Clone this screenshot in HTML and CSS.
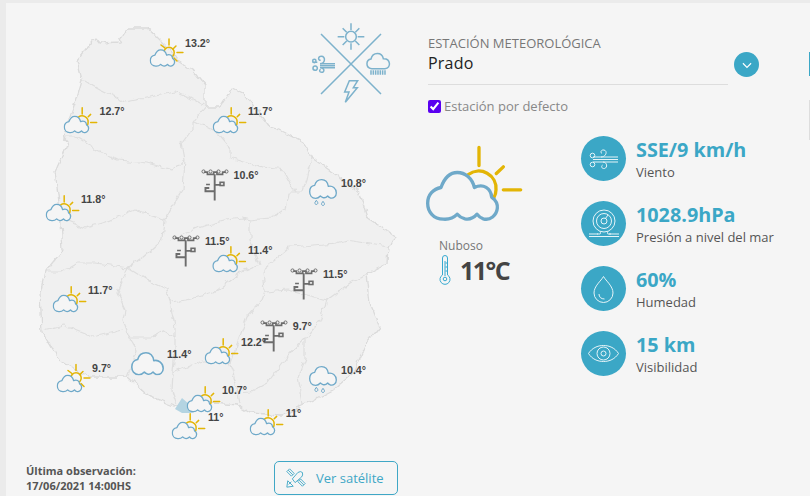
FILE: index.html
```html
<!DOCTYPE html>
<html lang="es">
<head>
    <meta charset="UTF-8">
    <meta name="viewport" content="width=device-width, initial-scale=1.0">
    <title>Estación meteorológica</title>
    <link rel="stylesheet" href="styles.css">
</head>
<body>

    <!-- Icon definitions -->
    <svg class="defs" width="0" height="0">
        <filter id="rough" x="-5%" y="-5%" width="110%" height="110%">
            <feTurbulence type="fractalNoise" baseFrequency="0.12" numOctaves="2" seed="4"/>
            <feDisplacementMap in="SourceGraphic" scale="7" xChannelSelector="R" yChannelSelector="G"/>
            <feGaussianBlur stdDeviation="0.35"/>
        </filter>

        <symbol id="sun-cloud" viewBox="30 30 300 260">
            <g class="sun">
                <path d="M192 58V112M244 136L265 116M265 185H317"/>
                <path d="M160 139A52 52 0 0 1 243 185Q243 198 236 210"/>
            </g>
            <path class="cloud" d="M85 273C55 273 38 250 38 225C38 200 55 182 78 178C88 150 105 133 127 133C150 133 172 150 178 178C205 165 228 180 230 207C245 215 248 232 247 240C245 262 225 278 205 272Q193 268 186 258Q170 276 150 272Q135 268 127 258Q110 275 85 273Z"/>
        </symbol>

        <symbol id="sun-cloud-full" viewBox="30 30 300 260">
            <g class="sun">
                <path d="M199 40V91M130 91L164 117M259 100L233 126M268 156H319M242 203L268 229"/>
                <circle cx="199" cy="156" r="45"/>
            </g>
            <path class="cloud" d="M85 273C55 273 38 250 38 225C38 200 55 182 78 178C88 150 105 133 127 133C150 133 172 150 178 178C205 165 228 180 230 207C245 215 248 232 247 240C245 262 225 278 205 272Q193 268 186 258Q170 276 150 272Q135 268 127 258Q110 275 85 273Z"/>
        </symbol>

        <symbol id="cloud" viewBox="0 0 84 60">
            <path class="cloud thin" d="M20 58C8 58 2 48 2 38C2 27 9 20 17 19C20 8 29 2 38 2C48 2 56 9 58 22C70 19 82 28 82 42C82 52 74 59 64 57Q59 55 56 51Q50 58 42 56Q36 54 34 51Q28 58 20 58Z"/>
        </symbol>

        <symbol id="rain-cloud" viewBox="0 0 84 82">
            <path class="cloud thin" d="M20 58C8 58 2 48 2 38C2 27 9 20 17 19C20 8 29 2 38 2C48 2 56 9 58 22C70 19 82 28 82 42C82 52 74 59 64 57Q59 55 56 51Q50 58 42 56Q36 54 34 51Q28 58 20 58Z"/>
            <path class="drop" d="M22 64L26 70A4.500 4.500 0 1 1 18 70ZM42 67L46 73A4.500 4.500 0 1 1 38 73Z"/>
        </symbol>

        <symbol id="station" viewBox="600 500 88 105">
            <g class="mast">
                <path d="M610 513H620V520H640V513H650V520H668V513H678"/>
                <path class="pole" d="M643 520V602M643 553H660M643 573H614V563H626"/>
                <rect x="660" y="545" width="12" height="10"/>
                <path d="M616 552H628"/>
            </g>
            <g class="mast-dots">
                <circle cx="608" cy="511" r="5"/>
                <circle cx="630" cy="511" r="5"/>
                <circle cx="655" cy="511" r="5"/>
                <circle cx="680" cy="511" r="5"/>
            </g>
        </symbol>
    </svg>

    <div class="panel">
        <div class="col-map">
            <svg class="map" viewBox="6 3 400 455" width="400" height="455">
                <!-- Country and departments -->
                <g class="land-group">
                    <path class="land" d="M128 28L147 28L157 37L170 50L177 60L193 70L205 85L205 107L220 107L232 88L243 93L257 110L270 127L280 130L303 142L312 157L340 177L360 193L367 217L397 238L388 247L387 263L367 273L370 303L380 327L367 343L353 373L333 390L300 407L283 415L250 413L237 405L213 403L177 407L147 395L128 377L87 377L57 357L42 332L40 293L45 272L63 250L60 210L55 172L68 143L63 137L77 97L82 80L77 60L95 37L100 43L120 42Z"/>
                    <path class="border" d="M82 80L100 90L125 102L150 97L175 92L190 98L205 107L193 122L193 128L182 143L185 160L173 170L147 163L120 160L97 150L77 137L63 137"/>
                    <path class="border" d="M185 160L183 190L170 210L165 220L163 240L143 257L128 268L117 293L125 310L123 320L130 338L137 350L128 377"/>
                    <path class="border" d="M165 220L135 210L105 222L85 228L65 220"/>
                    <path class="border" d="M128 268L97 263L78 263L63 272L45 272"/>
                    <path class="border" d="M128 268L147 280L167 290L170 302L187 300L213 293L240 273L260 264L250 240L250 220L270 218L285 210L288 192L303 192L307 180L312 157"/>
                    <path class="border" d="M170 302L175 327L175 350L173 373L172 390L177 405"/>
                    <path class="border" d="M130 338L150 338L163 330L175 338"/>
                    <path class="border" d="M42 330L63 325L93 337L123 330"/>
                    <path class="border" d="M173 373L200 362L227 357L233 373L240 403"/>
                    <path class="border" d="M230 363L247 317L262 300L265 292L263 270L290 247L337 243L347 240L388 247"/>
                    <path class="border" d="M265 292L287 290L327 300L350 283L367 273"/>
                    <path class="border" d="M233 393L250 392L267 383L287 357L305 338L320 320L327 300M305 338L305 358L298 377L302 397L303 405"/>
                    <path class="border" d="M193 120L218 133L230 147L230 157L263 167L283 170L295 192"/>
                    <path class="border" d="M250 220L242 218L227 220L200 227L170 240"/>
                </g>
                <path class="bay" d="M175 409L182 398L190 405L203 408L192 413L182 413Z"/>

                <!-- Stations -->
                <use class="small" href="#sun-cloud-full" x="149.4" y="37.9" width="34.8" height="30.2"/>
                <use class="small" href="#sun-cloud" x="63.4" y="104.4" width="34.8" height="30.2"/>
                <use class="small" href="#sun-cloud" x="212.4" y="104.4" width="34.8" height="30.2"/>
                <use class="small" href="#sun-cloud" x="45.4" y="192.4" width="34.8" height="30.2"/>
                <use class="small" href="#sun-cloud" x="212.1" y="243.4" width="34.8" height="30.2"/>
                <use class="small" href="#sun-cloud" x="52.4" y="283.4" width="34.8" height="30.2"/>
                <use class="small" href="#sun-cloud-full" x="56.4" y="363.4" width="34.8" height="30.2"/>
                <use class="small" href="#sun-cloud" x="204.4" y="335.4" width="34.8" height="30.2"/>
                <use class="small" href="#sun-cloud" x="186.4" y="383.4" width="34.8" height="30.2"/>
                <use class="small" href="#sun-cloud" x="171.4" y="410.4" width="34.8" height="30.2"/>
                <use class="small" href="#sun-cloud" x="249.4" y="406.4" width="34.8" height="30.2"/>
                <use href="#cloud" x="131" y="352" width="33" height="23.6"/>
                <use href="#rain-cloud" x="309" y="179" width="28" height="27.3"/>
                <use href="#rain-cloud" x="309" y="366" width="28" height="27.3"/>
                <use href="#station" x="201" y="168" width="28" height="33.4"/>
                <use href="#station" x="172" y="234" width="28" height="33.4"/>
                <use href="#station" x="290" y="267" width="28" height="33.4"/>
                <use href="#station" x="260" y="319" width="28" height="33.4"/>

                <text x="185" y="47">13.2°</text>
                <text x="99.5" y="115">12.7°</text>
                <text x="248" y="115">11.7°</text>
                <text x="81" y="203">11.8°</text>
                <text x="233.5" y="179">10.6°</text>
                <text x="341" y="187">10.8°</text>
                <text x="205" y="245">11.5°</text>
                <text x="248" y="254">11.4°</text>
                <text x="323" y="278">11.5°</text>
                <text x="292.7" y="330">9.7°</text>
                <text x="88" y="294">11.7°</text>
                <text x="92" y="372">9.7°</text>
                <text x="167" y="358">11.4°</text>
                <text x="241" y="346">12.2°</text>
                <text x="222" y="394">10.7°</text>
                <text x="208" y="421">11°</text>
                <text x="285.7" y="417">11°</text>
                <text x="341" y="374">10.4°</text>

                <!-- Emblem -->
                <g class="emblem" transform="translate(300 15) scale(.3333)">
                    <path d="M63 57L243 237M243 57L63 237"/>
                    <circle cx="153" cy="65" r="16"/>
                    <path d="M153 25V45M153 85V104M113 65H133M173 65H193M128 40L140 52M178 40L166 52M128 90L140 78M178 90L166 78"/>
                    <path d="M60 146H105M60 152H105M60 158H105"/>
                    <path d="M60 146C76 146 78 124 64 124C54 124 53 136 62 136"/>
                    <path d="M38 142H52M64 158C74 160 74 172 65 172C58 172 57 165 62 163M46 153A6 6 0 1 1 45 166A6 6 0 0 1 46 153"/>
                    <circle cx="43" cy="138" r="5"/>
                    <path d="M215 161C195 158 198 134 213 132C218 110 246 110 250 131C272 130 275 160 255 161Z"/>
                    <path d="M213 166V179M220 166V179M227 166V179M234 166V179M241 166V179M248 166V179M255 166V179"/>
                    <path d="M148 197H173L160 218H172L136 262L147 231H134Z"/>
                </g>
            </svg>

            <div class="map-footer">
                <p class="last-obs">Última observación:<br>17/06/2021 14:00HS</p>
                <button class="btn-sat">
                    <svg class="sat-icon" viewBox="0 0 24 24" width="22" height="22">
                        <path d="M8 13L14 6Q17 4 19 6Q20 9 18 11L11 17Z"/>
                        <path d="M2 5L5 2L10 7L7 10ZM14 16L17 13L22 18L19 21Z"/>
                        <path d="M3.500 3.500L8.500 8.500M15.500 14.500L20.500 19.500"/>
                        <path d="M3 15L9 21L2 22ZM7 16L4 19"/>
                    </svg>
                    Ver satélite
                </button>
            </div>
        </div>

        <div class="col-info">
            <div class="station-select">
                <div class="select-text">
                    <span class="select-label">ESTACIÓN METEOROLÓGICA</span>
                    <span class="select-value">Prado</span>
                </div>
                <span class="select-btn">
                    <svg viewBox="0 0 12 12" width="14" height="14"><path d="M2.500 4.500L6 8L9.500 4.500"/></svg>
                </span>
            </div>

            <label class="default-check">
                <input type="checkbox" checked>
                Estación por defecto
            </label>

            <div class="weather">
                <div class="now">
                    <svg class="now-icon" width="100" height="87"><use href="#sun-cloud" width="100" height="87"/></svg>
                    <div class="now-text">
                        <span class="now-state">Nuboso</span>
                        <div class="now-temp">
                            <svg class="thermo" viewBox="0 0 12 30" width="12" height="30">
                                <path d="M3.500 20V3A2.500 2.500 0 0 1 8.500 3V20A5 5 0 1 1 3.500 20Z"/>
                                <circle cx="6" cy="24" r="1.800"/>
                                <path d="M6 21V6M8.500 8H6.500M8.500 12H6.500M8.500 16H6.500"/>
                            </svg>
                            <span>11°C</span>
                        </div>
                    </div>
                </div>

                <ul class="stats">
                    <li>
                        <span class="stat-icon">
                            <svg viewBox="0 0 45 45" width="45" height="45">
                                <path d="M12 21H37M12 23.500H37M12 26H37"/>
                                <path d="M20 21C25 21 27 15 23 14C20 13.500 19 16.500 21 17.500"/>
                                <circle cx="11.500" cy="19.500" r="2.300"/>
                                <path d="M22 26C26 26 27 31.500 23.500 32.500C20.500 33 20 30 21.500 29"/>
                                <circle cx="11.500" cy="28.500" r="2.300"/>
                            </svg>
                        </span>
                        <div class="stat-text"><strong>SSE/9 km/h</strong><span>Viento</span></div>
                    </li>
                    <li>
                        <span class="stat-icon">
                            <svg viewBox="0 0 45 45" width="45" height="45">
                                <circle cx="23" cy="20" r="11"/>
                                <circle cx="23" cy="20" r="7.500"/>
                                <circle cx="23" cy="20" r="3"/>
                                <path d="M24 18L27 14M16 33H19C19.500 33 20 32 19 30.500M30 33H27C26.500 33 26 32 27 30.500M8 33H17M28 33H38M8 35.500H38"/>
                            </svg>
                        </span>
                        <div class="stat-text"><strong>1028.9hPa</strong><span>Presión a nivel del mar</span></div>
                    </li>
                    <li>
                        <span class="stat-icon">
                            <svg viewBox="0 0 45 45" width="45" height="45">
                                <path d="M22.500 10.500C20 15 13 20 13 27A9.500 9.500 0 0 0 32 27C32 20 25 15 22.500 10.500Z"/>
                                <path d="M18 28C18 31 20 33 23.500 33"/>
                            </svg>
                        </span>
                        <div class="stat-text"><strong>60%</strong><span>Humedad</span></div>
                    </li>
                    <li>
                        <span class="stat-icon">
                            <svg viewBox="0 0 45 45" width="45" height="45">
                                <path d="M7.500 22.500C11 17 16.500 14.500 22.500 14.500C28.500 14.500 34 17 37.500 22.500C34 28 28.500 30.500 22.500 30.500C16.500 30.500 11 28 7.500 22.500Z"/>
                                <circle cx="22.500" cy="22.500" r="6.500"/>
                                <circle cx="22.500" cy="22.500" r="2.500"/>
                            </svg>
                        </span>
                        <div class="stat-text"><strong>15 km</strong><span>Visibilidad</span></div>
                    </li>
                </ul>
            </div>
        </div>

        <span class="edge-tab"></span>
        <span class="edge-line"></span>
    </div>

</body>
</html>
```

FILE: styles.css
```css
* {
    box-sizing: border-box;
}

html, body {
    height: 100%;
}

body {
    font-family: "Open Sans", sans-serif;
    background-color: #ebebeb;
    margin: 0;
    padding: 3px 0 0 6px;
    overflow: hidden;
}

.defs {
    position: absolute;
}

.panel {
    position: relative;
    display: flex;
    height: 493px;
    background-color: #f5f5f5;
    overflow: hidden;
}

.col-map {
    width: 422px;
    flex-shrink: 0;
}

.map {
    display: block;
    font-family: "Liberation Sans", Arial, sans-serif;
    font-size: 10.7px;
    font-weight: bold;
    fill: #444;
}

.land-group {
    filter: url(#rough);
}

.land {
    fill: #f0f0f0;
    stroke: #dbdbdb;
    stroke-width: 1.300;
    stroke-linejoin: round;
}

.border {
    fill: none;
    stroke: #dedede;
    stroke-width: 1.200;
    stroke-linejoin: round;
}

.bay {
    fill: #b4d4e2;
}

.small {
    --ray: 13;
    --line: 11;
}

.cloud {
    fill: #f5f5f5;
    stroke: #6fa9c9;
    stroke-width: var(--line, 10);
    stroke-linejoin: round;
}

.cloud.thin {
    stroke-width: 4;
}

.drop {
    fill: none;
    stroke: #6fa9c9;
    stroke-width: 3;
}

.sun path, .sun circle {
    fill: none;
    stroke: #e3b505;
    stroke-width: var(--ray, 10);
    stroke-linecap: round;
}

.mast path, .mast rect, .mast-dots circle {
    fill: none;
    stroke: #6c6c6c;
    stroke-width: 5;
}

.mast .pole {
    stroke-width: 6;
}

.mast-dots circle {
    stroke-width: 3;
}

.emblem path, .emblem circle {
    fill: none;
    stroke: #7db2cc;
    stroke-width: 4.500;
}

/* Footer under the map */
.map-footer {
    display: flex;
    align-items: flex-start;
    justify-content: space-between;
    padding: 3px 30px 0 20px;
}

.last-obs {
    margin: 2px 0 0;
    font-size: 11px;
    line-height: 15px;
    font-weight: 700;
    color: #555;
}

.btn-sat {
    display: flex;
    align-items: center;
    gap: 9px;
    width: 124px;
    height: 34px;
    padding: 0 0 0 10px;
    font-family: inherit;
    font-size: 13px;
    color: #3fa7c6;
    background: none;
    border: 1px solid #3fa7c6;
    border-radius: 5px;
}

.sat-icon path {
    fill: none;
    stroke: #3fa7c6;
    stroke-width: 1;
}

/* Right column */
.col-info {
    flex: 1;
    padding-top: 32px;
}

.station-select {
    display: flex;
    align-items: center;
    gap: 6px;
}

.select-text {
    display: flex;
    flex-direction: column;
    width: 300px;
    height: 50px;
    border-bottom: 1px solid #ddd;
}

.select-label {
    font-size: 13px;
    line-height: 17px;
    color: #777;
}

.select-value {
    font-size: 16px;
    line-height: 22px;
    color: #222;
    letter-spacing: .2px;
}

.select-btn {
    display: flex;
    align-items: center;
    justify-content: center;
    width: 25px;
    height: 25px;
    margin-top: 9px;
    background-color: #3ba7c6;
    border-radius: 50%;
}

.select-btn path {
    fill: none;
    stroke: #fff;
    stroke-width: 1;
}

.default-check {
    display: flex;
    align-items: center;
    gap: 3px;
    margin-top: 12px;
    font-size: 13px;
    line-height: 18px;
    color: #888;
}

.default-check input {
    width: 13px;
    height: 13px;
    margin: 0;
    accent-color: #5a00f0;
}

.weather {
    display: flex;
    margin-top: 21px;
}

.now {
    width: 153px;
    flex-shrink: 0;
}

.now-icon {
    display: block;
    margin: 2px 0 0 -3px;
}

.now-text {
    margin: 12px 0 0 11px;
}

.now-state {
    display: block;
    font-size: 12px;
    line-height: 18px;
    color: #777;
}

.now-temp {
    display: flex;
    align-items: center;
    gap: 9px;
    font-size: 25px;
    line-height: 30px;
    font-weight: 700;
    letter-spacing: -1.500px;
    color: #444;
}

.thermo path, .thermo circle {
    fill: none;
    stroke: #37a9d0;
    stroke-width: 1;
}

.stats {
    display: flex;
    flex-direction: column;
    gap: 20px;
    list-style-type: none;
    margin: 0;
    padding: 0;
}

.stats li {
    display: flex;
    align-items: center;
    gap: 10px;
    height: 45px;
}

.stat-icon {
    width: 45px;
    height: 45px;
    background-color: #3ba7c6;
    border-radius: 50%;
}

.stat-icon svg {
    display: block;
}

.stat-icon path, .stat-icon circle {
    fill: none;
    stroke: #e6f4f8;
    stroke-width: 1;
}

.stat-text {
    display: flex;
    flex-direction: column;
}

.stat-text strong {
    font-size: 19.800px;
    line-height: 27px;
    font-weight: 700;
    color: #3ba7c6;
}

.stat-text span {
    font-size: 13px;
    line-height: 18px;
    color: #555;
}

/* Bits of the next panel at the window edge */
.edge-tab {
    position: absolute;
    right: 0;
    top: 49px;
    width: 1px;
    height: 24px;
    background-color: #3ba7c6;
}

.edge-line {
    position: absolute;
    right: 0;
    top: 97px;
    width: 1px;
    height: 40px;
    background-color: #ddd;
}
```
